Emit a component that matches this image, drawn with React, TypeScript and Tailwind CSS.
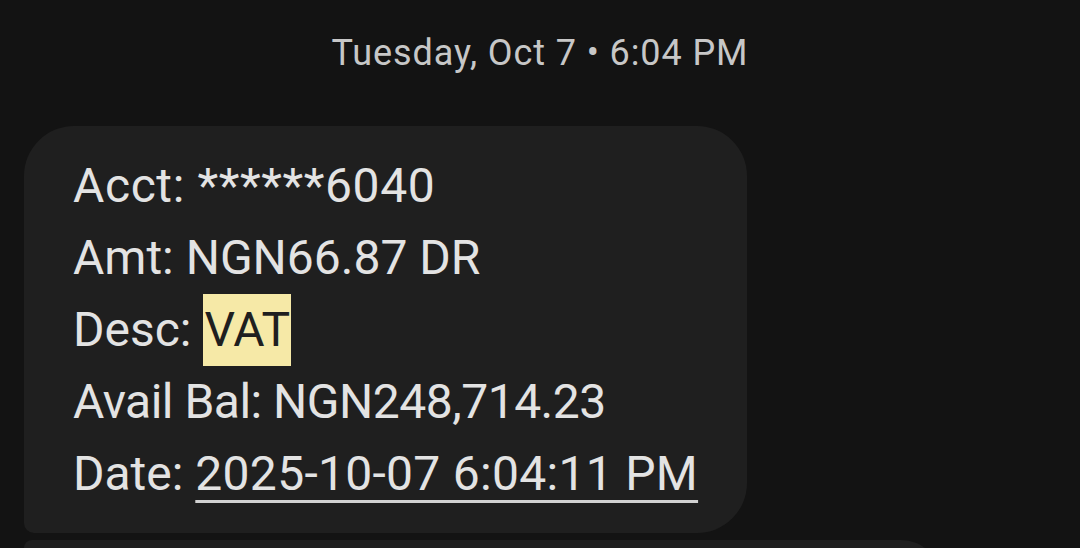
export default function App() {
  const font = { fontFamily: "Roboto, 'Noto Sans', sans-serif" };
  return (
    <div
      className="w-[1080px] h-[548px] overflow-hidden bg-[#131313] text-[#e3e3e3]"
      style={font}
    >
      <div className="h-[126px] pt-[27px] text-center text-[36px] leading-[52px] tracking-[0.9px] text-[#c7c7c7]">
        Tuesday, Oct 7 • 6:04 PM
      </div>

      <div className="flex flex-col gap-[7px] pl-6">
        {/* message bubble */}
        <div className="w-[723px] h-[407px] rounded-[50px] rounded-bl-[10px] bg-[#1f1f1f] pl-[49px] pt-[24px] text-[48px] leading-[72px]">
          <p className="tracking-[0.6px]">Acct: ******6040</p>
          <p>Amt: NGN66.87 DR</p>
          <p>
            Desc:{" "}
            <span className="inline-block bg-[#f6e9a7] px-[1px] text-[#1f1f1f]">
              VAT
            </span>
          </p>
          <p className="tracking-[-0.5px]">Avail Bal: NGN248,714.23</p>
          <p>
            Date:{" "}
            <span className="tracking-[0.3px] underline decoration-[3px] underline-offset-[10px] decoration-[#d2d2d2]">
              2025-10-07 6:04:11 PM
            </span>
          </p>
        </div>

        {/* next bubble, cut off */}
        <div className="w-[917px] h-[80px] rounded-[50px] rounded-tl-[10px] bg-[#1f1f1f]" />
      </div>
    </div>
  );
}
